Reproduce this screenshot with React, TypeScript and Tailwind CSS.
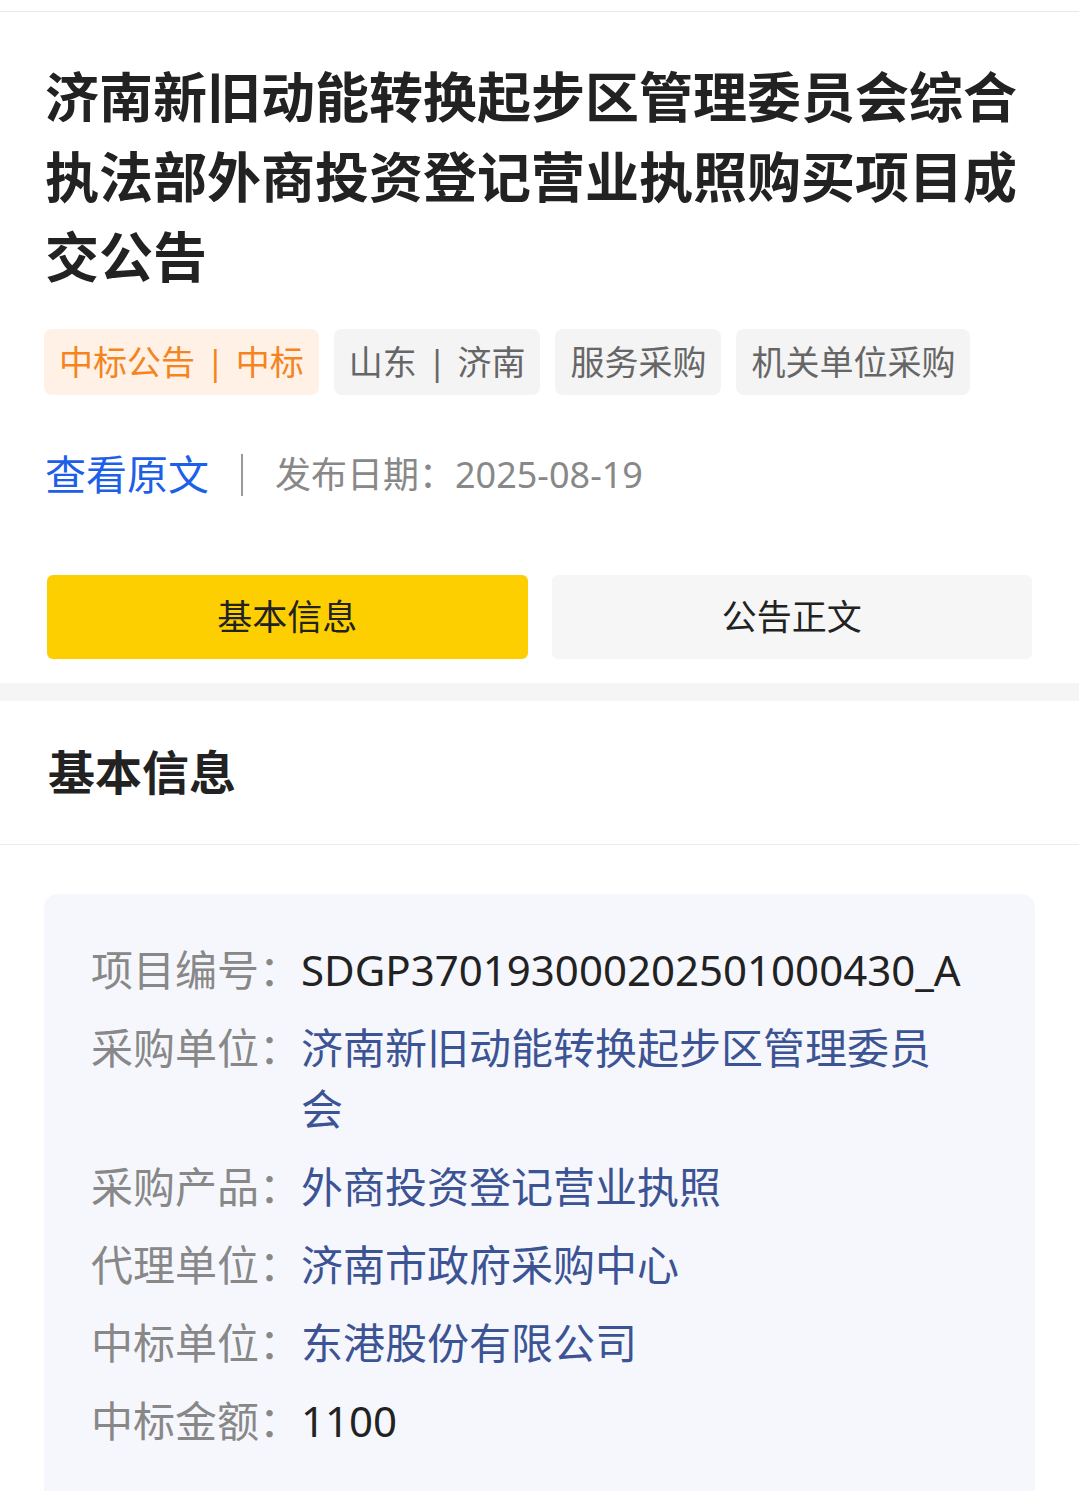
import React from 'react'

const font = { fontFamily: '"Noto Sans", "Noto Sans CJK SC", sans-serif' }

const tags = [
  { parts: ['中标公告', '中标'], hot: true },
  { parts: ['山东', '济南'], hot: false },
  { parts: ['服务采购'], hot: false },
  { parts: ['机关单位采购'], hot: false },
]

const rows: { label: string; value: string; kind: 'plain' | 'link' }[] = [
  { label: '项目编号：', value: 'SDGP370193000202501000430_A', kind: 'plain' },
  { label: '采购单位：', value: '济南新旧动能转换起步区管理委员会', kind: 'link' },
  { label: '采购产品：', value: '外商投资登记营业执照', kind: 'link' },
  { label: '代理单位：', value: '济南市政府采购中心', kind: 'link' },
  { label: '中标单位：', value: '东港股份有限公司', kind: 'link' },
  { label: '中标金额：', value: '1100', kind: 'plain' },
]

export default function App() {
  return (
    <div className="min-h-screen bg-white" style={font}>
      <div className="h-[12px] border-b border-[#e8e8e8]" />

      <div className="px-[45px] pt-[45px]">
        <h1 className="text-[54px] leading-[80px] font-bold text-[#222222]">
          济南新旧动能转换起步区管理委员会综合执法部外商投资登记营业执照购买项目成交公告
        </h1>

        <div className="mt-[32px] -ml-[1px] flex gap-[15px]">
          {tags.map(t => (
            <span
              key={t.parts.join()}
              className={`flex items-center px-[15px] h-[66px] text-[34px] rounded-[8px] whitespace-nowrap ${t.hot ? 'bg-[#fff1e5] text-[#f5841f]' : 'bg-[#f4f4f4] text-[#666666]'}`}
            >
              {t.parts[0]}
              {t.parts[1] && <span className="px-[11px]">|</span>}
              {t.parts[1]}
            </span>
          ))}
        </div>

        <div className="mt-[50px] h-[60px] flex items-center">
          <span className="text-[41px] text-[#1d5fe8]">查看原文</span>
          <span className="mx-[32px] w-[2px] h-[42px] bg-[#9a9a9a]" />
          <span className="text-[36px] text-[#888888]">发布日期：2025-08-19</span>
        </div>
      </div>

      <div className="mt-[70px] px-[47px] grid grid-cols-2 gap-[24px]">
        <button className="h-[84px] rounded-[6px] bg-[#fdcf00] text-[35px] text-[#222222]">基本信息</button>
        <button className="h-[84px] rounded-[6px] bg-[#f6f6f6] text-[35px] text-[#222222]">公告正文</button>
      </div>

      <div className="mt-[24px] h-[18px] bg-[#f5f5f5]" />

      <div className="h-[144px] flex items-center px-[48px] border-b border-[#ebebeb]">
        <h2 className="text-[47px] font-bold text-[#222222]">基本信息</h2>
      </div>

      <div className="mt-[49px] mx-[44px] rounded-[14px] bg-[#f6f7fd] pl-[47px] pr-[79px] pt-[45px] pb-[80px] flex flex-col gap-[17px]">
        {rows.map(r => (
          <div key={r.label} className="flex text-[42px] leading-[61px]">
            <span className="shrink-0 text-[#888888] whitespace-nowrap">{r.label}</span>
            <span className={`flex-1 min-w-0 ${r.kind === 'link' ? 'text-[#3c5394]' : 'text-[#222222]'}`}>{r.value}</span>
          </div>
        ))}
      </div>
    </div>
  )
}
